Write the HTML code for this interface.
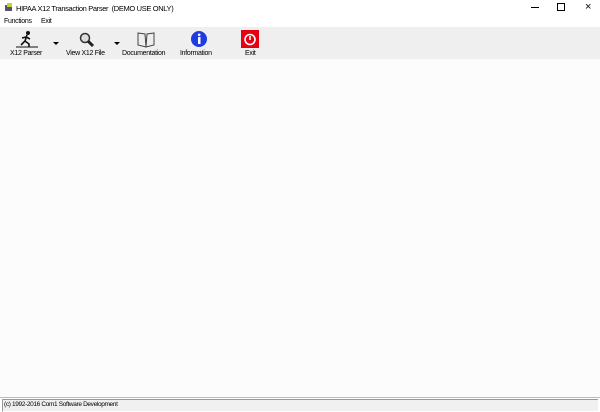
<!DOCTYPE html>
<html><head><style>
body{margin:0;width:600px;height:412px;background:#fff;font-family:"Liberation Sans",sans-serif;position:relative;overflow:hidden}
.a{position:absolute}
.t{font-size:7px;letter-spacing:-0.3px;color:#000;white-space:nowrap}
</style></head><body>
<div class="a" style="left:0;top:0;width:600px;height:16px;background:#fff"></div>
<svg class="a" style="left:4px;top:3px" width="10" height="10"><rect x="1" y="2" width="7" height="6" fill="#556"/><rect x="3" y="0" width="5" height="4" fill="#cc3"/></svg>
<div class="a t" style="left:16px;top:4px;font-size:7.5px;letter-spacing:-0.35px">HIPAA X12 Transaction Parser&nbsp; (DEMO USE ONLY)</div>
<div class="a" style="left:531px;top:7px;width:8px;height:1px;background:#000"></div>
<div class="a" style="left:557px;top:3px;width:6px;height:6px;border:1px solid #000"></div>
<div class="a t" style="left:585px;top:1px;font-size:11px">×</div>
<div class="a t" style="left:4px;top:18px">Functions</div>
<div class="a t" style="left:41px;top:18px">Exit</div>
<div class="a" style="left:0;top:27px;width:600px;height:32px;background:#efefef"></div>
<div class="a" style="left:0;top:59px;width:600px;height:338px;background:#fcfcfc"></div>
<svg class="a" style="left:16px;top:30px" width="22" height="18"><circle cx="12" cy="3" r="2" fill="#111"/><path d="M11 5 L9 11 L5 15 M9 11 L13 14 L13 17 M10 7 L14 9 M10 7 L6 8" stroke="#111" stroke-width="1.6" fill="none"/><line x1="0" y1="17" x2="22" y2="17" stroke="#111"/></svg>
<div class="a t" style="left:10px;top:50px">X12 Parser</div>
<div class="a" style="left:53px;top:42px;border:3px solid transparent;border-top:3px solid #000;border-bottom:0"></div>
<svg class="a" style="left:79px;top:32px" width="16" height="16"><circle cx="6" cy="6" r="4.5" fill="#ddd" stroke="#333" stroke-width="1.5"/><line x1="9" y1="9" x2="14" y2="14" stroke="#222" stroke-width="3"/></svg>
<div class="a t" style="left:66px;top:50px">View X12 File</div>
<div class="a" style="left:114px;top:42px;border:3px solid transparent;border-top:3px solid #000;border-bottom:0"></div>
<svg class="a" style="left:137px;top:31px" width="18" height="17"><path d="M1 2 L8 3 L9 16 L1 14 Z M17 2 L10 3 L9 16 L17 14 Z" fill="#eee" stroke="#444"/></svg>
<div class="a t" style="left:122px;top:50px">Documentation</div>
<svg class="a" style="left:191px;top:31px" width="16" height="16"><circle cx="8" cy="8" r="8" fill="#1f3ce0"/><rect x="7" y="6" width="2.5" height="7" fill="#fff"/><circle cx="8.2" cy="3.8" r="1.3" fill="#fff"/></svg>
<div class="a t" style="left:180px;top:50px">Information</div>
<svg class="a" style="left:241px;top:30px" width="18" height="18"><rect width="18" height="18" fill="#e60012"/><circle cx="9" cy="9.5" r="5" fill="none" stroke="#fff" stroke-width="1.6"/><line x1="9" y1="6" x2="9" y2="10" stroke="#fff" stroke-width="1.6"/></svg>
<div class="a t" style="left:245px;top:50px">Exit</div>
<div class="a" style="left:0;top:397px;width:600px;height:1px;background:#bbb"></div>
<div class="a" style="left:2px;top:399px;width:595px;height:11px;background:#f0f0f0;border-top:1px solid #999;border-left:1px solid #999;border-bottom:1px solid #fff"></div>
<div class="a t" style="left:4px;top:401px;font-size:6.5px;letter-spacing:-0.35px">(c) 1992-2016 Com1 Software Development</div>
</body></html>
